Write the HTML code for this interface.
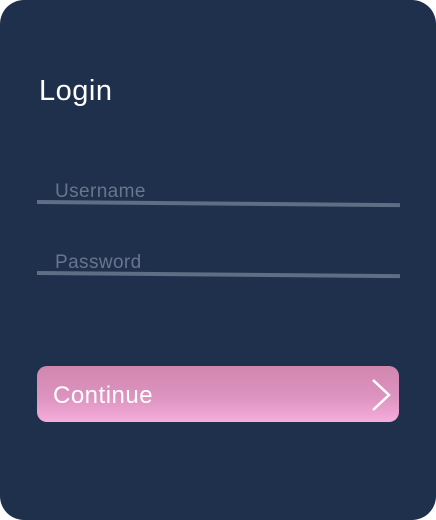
<!DOCTYPE html>
<html><head><meta charset="utf-8"><style>
html,body{margin:0;padding:0;background:#fff;}
body{width:436px;height:520px;position:relative;overflow:hidden;font-family:"Liberation Sans",sans-serif;}
.card{position:absolute;left:0;top:0;width:436px;height:520px;background:#1e304b;border-radius:24px;}
.t{position:absolute;left:39px;top:75px;color:#fff;font-size:29px;letter-spacing:0.5px;}
.lbl{position:absolute;left:55px;color:#66768c;font-size:19px;letter-spacing:0.4px;}
.line{position:absolute;left:37px;width:363px;height:4px;background:#5e6e84;transform-origin:left center;transform:rotate(0.5deg);}
.btn{position:absolute;left:37px;top:366px;width:362px;height:56px;border-radius:10px;background:linear-gradient(180deg,#d186ae,#dc93bf 55%,#f6addb);}
.btn span{position:absolute;left:16px;top:16px;color:#fff;font-size:24px;letter-spacing:0.5px;}
.btn svg{position:absolute;right:7px;top:12px;}
</style></head><body>
<div class="card">
<div class="t">Login</div>
<div class="lbl" style="top:181px">Username</div>
<div class="line" style="top:200px"></div>
<div class="lbl" style="top:252px">Password</div>
<div class="line" style="top:271px"></div>
<div class="btn"><span>Continue</span>
<svg width="22" height="34" viewBox="0 0 22 34"><path d="M3 2 L19 17 L3 32" stroke="#fff" stroke-width="2.5" fill="none"/></svg></div>
</div>
</body></html>
